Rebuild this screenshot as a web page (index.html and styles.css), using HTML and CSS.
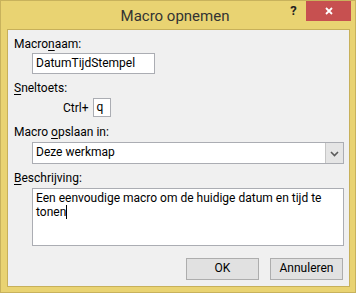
FILE: index.html
```html
<!DOCTYPE html>
<html>
<head>
<meta charset="utf-8">
<link rel="stylesheet" href="styles.css">
</head>
<body>
<div class="window">
  <div class="titlebar">
    <div class="title">Macro opnemen</div>
    <div class="controls">
      <div class="help">?</div>
      <div class="close">
        <svg width="8" height="8" viewBox="0 0 8 8"><path d="M1 1L7 7M7 1L1 7" stroke="#fff" stroke-width="1.8" fill="none"/></svg>
      </div>
    </div>
  </div>
  <div class="client">
    <div class="lbl lbl-first">Macro<u>n</u>aam:</div>
    <div class="field field-name">DatumTijdStempel</div>
    <div class="lbl lbl-gap"><u>S</u>neltoets:</div>
    <div class="shortcut">
      <span class="ctrl">Ctrl+</span>
      <span class="keybox">q</span>
    </div>
    <div class="lbl lbl-gap">Macro <u>o</u>pslaan in:</div>
    <div class="select">
      <span class="select-text">Deze werkmap</span>
      <span class="select-btn">
        <svg width="9" height="6" viewBox="0 0 9 6"><path d="M1 1L4.5 4.5L8 1" stroke="#5a5a5a" stroke-width="1.6" fill="none"/></svg>
      </span>
    </div>
    <div class="lbl lbl-gap"><u>B</u>eschrijving:</div>
    <div class="textarea">Een eenvoudige macro om de huidige datum en tijd te<br>tonen<span class="caret"></span></div>
    <div class="buttons">
      <div class="btn">OK</div>
      <div class="btn">Annuleren</div>
    </div>
  </div>
</div>
</body>
</html>
```
FILE: styles.css
```css
* { box-sizing: border-box; }
html, body { margin: 0; padding: 0; }
body {
  width: 360px;
  height: 296px;
  background: #ffffff;
  font-family: Roboto, "Open Sans", sans-serif;
  font-size: 12px;
  color: #000;
  overflow: hidden;
}
.window {
  width: 356px;
  height: 293px;
  background: #e9d372;
  border: 1px solid #c8b25c;
  padding: 0 5px 5px 6px;
  display: flex;
  flex-direction: column;
}
.titlebar {
  height: 28px;
  display: grid;
  grid-template-areas: "a";
}
.title {
  grid-area: a;
  justify-self: center;
  margin-left: -7px;
  font-size: 15px;
  line-height: 28px;
  color: #333;
  padding-top: 1px;
}
.controls {
  grid-area: a;
  justify-self: end;
  align-self: start;
  display: flex;
  margin-right: -1px;
}
.help {
  width: 26px;
  height: 20px;
  font-weight: bold;
  font-size: 13px;
  line-height: 20px;
  text-align: center;
  color: #222;
  padding-left: 1px;
}
.close {
  width: 45px;
  height: 20px;
  background: #c75050;
  display: flex;
  align-items: center;
  justify-content: center;
  padding-left: 1px;
  padding-bottom: 1px;
}
.client {
  flex: 1;
  background: #f0f0f0;
  border: 1px solid #c7b05a;
  padding: 0 5px 0 6px;
  display: flex;
  flex-direction: column;
}
.lbl {
  line-height: 15px;
  height: 15px;
  white-space: nowrap;
}
.lbl u { text-decoration-thickness: 1px; text-underline-offset: 2px; }
.lbl-first { margin-top: 7px; }
.lbl-gap { margin-top: 7px; }
.field, .select, .textarea {
  margin-left: 18px;
  background: #fff;
  border: 1px solid #abadb3;
}
.field-name {
  margin-top: 1px;
  width: 123px;
  height: 21px;
  padding: 2px 3px 0;
  line-height: 15px;
}
.shortcut {
  margin-top: 2px;
  margin-left: 49px;
  display: flex;
  align-items: center;
  height: 19px;
}
.ctrl { line-height: 15px; padding-top: 1px; }
.keybox {
  margin-left: 4px;
  width: 18px;
  height: 19px;
  background: #fff;
  border: 1px solid #abadb3;
  padding: 1px 0 0 3px;
  line-height: 15px;
}
.shortcut + .lbl { margin-top: 8px; }
.select {
  margin-top: 2px;
  height: 22px;
  display: flex;
}
.select-text {
  flex: 1;
  padding: 2px 3px 0;
  line-height: 15px;
}
.select-btn {
  width: 18px;
  background: #e5e5e5;
  border-left: 1px solid #c6c6c6;
  display: flex;
  align-items: center;
  justify-content: center;
  padding-top: 1px;
}
.textarea {
  margin-top: 2px;
  height: 58px;
  padding: 3px 3px 0;
  line-height: 13px;
  white-space: nowrap;
}
.caret {
  display: inline-block;
  width: 1px;
  height: 14px;
  background: #000;
  vertical-align: -3px;
}
.buttons {
  margin-top: 12px;
  display: flex;
  justify-content: flex-end;
  gap: 11px;
  padding-right: 1px;
}
.btn {
  width: 73px;
  height: 22px;
  background: #e1e1e1;
  border: 1px solid #adadad;
  text-align: center;
  line-height: 19px;
}
```
